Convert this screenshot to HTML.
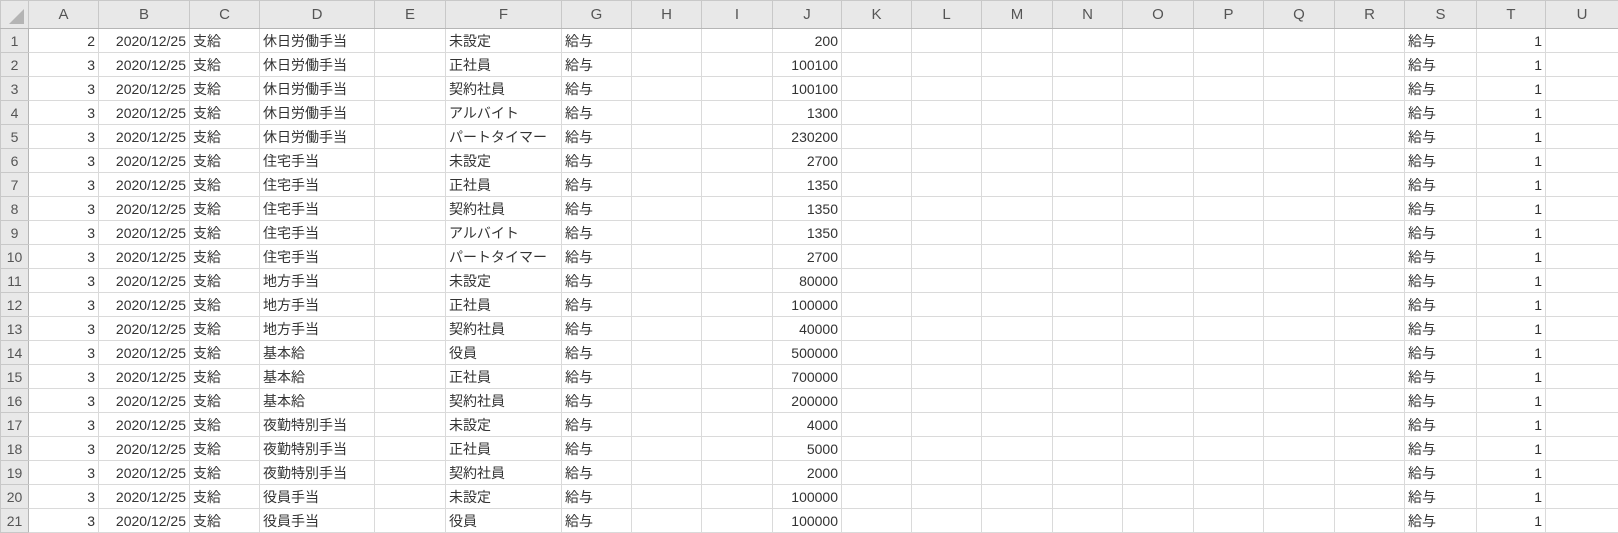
<!DOCTYPE html>
<html><head><meta charset="utf-8">
<style>
html,body{margin:0;padding:0;background:#fff;width:1618px;height:533px;overflow:hidden}
table{border-collapse:collapse;table-layout:fixed;width:1618px;font-family:"Liberation Sans","Noto Sans CJK JP",sans-serif;font-size:14px;color:#333}
td,th{border:1px solid #dadada;height:23px;padding:0 3px;white-space:nowrap;overflow:hidden;box-sizing:border-box}
th{background:#e8e8e8;font-weight:normal;color:#555;border-color:#c8c8c8;height:28px;text-align:center;border-bottom:1px solid #b5b5b5;font-size:15px}
td.h{background:#e8e8e8;color:#555;text-align:center;border-color:#c8c8c8;border-right:1px solid #b5b5b5;font-size:14px;padding:0}
td.r{text-align:right}
tr.d{height:24px}
th.c{position:relative}
th.c::after{content:"";position:absolute;right:4px;bottom:4px;border-left:15px solid transparent;border-bottom:15px solid #b4b4b4}
</style></head><body>
<table>
<colgroup><col style="width:28px"><col style="width:70px"><col style="width:91px"><col style="width:70px"><col style="width:115px"><col style="width:71px"><col style="width:116px"><col style="width:70px"><col style="width:70px"><col style="width:71px"><col style="width:69px"><col style="width:70px"><col style="width:70px"><col style="width:71px"><col style="width:70px"><col style="width:71px"><col style="width:70px"><col style="width:71px"><col style="width:70px"><col style="width:72px"><col style="width:69px"><col style="width:73px"></colgroup>
<tr><th class="c"></th><th>A</th><th>B</th><th>C</th><th>D</th><th>E</th><th>F</th><th>G</th><th>H</th><th>I</th><th>J</th><th>K</th><th>L</th><th>M</th><th>N</th><th>O</th><th>P</th><th>Q</th><th>R</th><th>S</th><th>T</th><th>U</th></tr>
<tr class="d"><td class="h">1</td><td class="r">2</td><td class="r">2020/12/25</td><td>支給</td><td>休日労働手当</td><td></td><td>未設定</td><td>給与</td><td></td><td></td><td class="r">200</td><td></td><td></td><td></td><td></td><td></td><td></td><td></td><td></td><td>給与</td><td class="r">1</td><td></td></tr>
<tr class="d"><td class="h">2</td><td class="r">3</td><td class="r">2020/12/25</td><td>支給</td><td>休日労働手当</td><td></td><td>正社員</td><td>給与</td><td></td><td></td><td class="r">100100</td><td></td><td></td><td></td><td></td><td></td><td></td><td></td><td></td><td>給与</td><td class="r">1</td><td></td></tr>
<tr class="d"><td class="h">3</td><td class="r">3</td><td class="r">2020/12/25</td><td>支給</td><td>休日労働手当</td><td></td><td>契約社員</td><td>給与</td><td></td><td></td><td class="r">100100</td><td></td><td></td><td></td><td></td><td></td><td></td><td></td><td></td><td>給与</td><td class="r">1</td><td></td></tr>
<tr class="d"><td class="h">4</td><td class="r">3</td><td class="r">2020/12/25</td><td>支給</td><td>休日労働手当</td><td></td><td>アルバイト</td><td>給与</td><td></td><td></td><td class="r">1300</td><td></td><td></td><td></td><td></td><td></td><td></td><td></td><td></td><td>給与</td><td class="r">1</td><td></td></tr>
<tr class="d"><td class="h">5</td><td class="r">3</td><td class="r">2020/12/25</td><td>支給</td><td>休日労働手当</td><td></td><td>パートタイマー</td><td>給与</td><td></td><td></td><td class="r">230200</td><td></td><td></td><td></td><td></td><td></td><td></td><td></td><td></td><td>給与</td><td class="r">1</td><td></td></tr>
<tr class="d"><td class="h">6</td><td class="r">3</td><td class="r">2020/12/25</td><td>支給</td><td>住宅手当</td><td></td><td>未設定</td><td>給与</td><td></td><td></td><td class="r">2700</td><td></td><td></td><td></td><td></td><td></td><td></td><td></td><td></td><td>給与</td><td class="r">1</td><td></td></tr>
<tr class="d"><td class="h">7</td><td class="r">3</td><td class="r">2020/12/25</td><td>支給</td><td>住宅手当</td><td></td><td>正社員</td><td>給与</td><td></td><td></td><td class="r">1350</td><td></td><td></td><td></td><td></td><td></td><td></td><td></td><td></td><td>給与</td><td class="r">1</td><td></td></tr>
<tr class="d"><td class="h">8</td><td class="r">3</td><td class="r">2020/12/25</td><td>支給</td><td>住宅手当</td><td></td><td>契約社員</td><td>給与</td><td></td><td></td><td class="r">1350</td><td></td><td></td><td></td><td></td><td></td><td></td><td></td><td></td><td>給与</td><td class="r">1</td><td></td></tr>
<tr class="d"><td class="h">9</td><td class="r">3</td><td class="r">2020/12/25</td><td>支給</td><td>住宅手当</td><td></td><td>アルバイト</td><td>給与</td><td></td><td></td><td class="r">1350</td><td></td><td></td><td></td><td></td><td></td><td></td><td></td><td></td><td>給与</td><td class="r">1</td><td></td></tr>
<tr class="d"><td class="h">10</td><td class="r">3</td><td class="r">2020/12/25</td><td>支給</td><td>住宅手当</td><td></td><td>パートタイマー</td><td>給与</td><td></td><td></td><td class="r">2700</td><td></td><td></td><td></td><td></td><td></td><td></td><td></td><td></td><td>給与</td><td class="r">1</td><td></td></tr>
<tr class="d"><td class="h">11</td><td class="r">3</td><td class="r">2020/12/25</td><td>支給</td><td>地方手当</td><td></td><td>未設定</td><td>給与</td><td></td><td></td><td class="r">80000</td><td></td><td></td><td></td><td></td><td></td><td></td><td></td><td></td><td>給与</td><td class="r">1</td><td></td></tr>
<tr class="d"><td class="h">12</td><td class="r">3</td><td class="r">2020/12/25</td><td>支給</td><td>地方手当</td><td></td><td>正社員</td><td>給与</td><td></td><td></td><td class="r">100000</td><td></td><td></td><td></td><td></td><td></td><td></td><td></td><td></td><td>給与</td><td class="r">1</td><td></td></tr>
<tr class="d"><td class="h">13</td><td class="r">3</td><td class="r">2020/12/25</td><td>支給</td><td>地方手当</td><td></td><td>契約社員</td><td>給与</td><td></td><td></td><td class="r">40000</td><td></td><td></td><td></td><td></td><td></td><td></td><td></td><td></td><td>給与</td><td class="r">1</td><td></td></tr>
<tr class="d"><td class="h">14</td><td class="r">3</td><td class="r">2020/12/25</td><td>支給</td><td>基本給</td><td></td><td>役員</td><td>給与</td><td></td><td></td><td class="r">500000</td><td></td><td></td><td></td><td></td><td></td><td></td><td></td><td></td><td>給与</td><td class="r">1</td><td></td></tr>
<tr class="d"><td class="h">15</td><td class="r">3</td><td class="r">2020/12/25</td><td>支給</td><td>基本給</td><td></td><td>正社員</td><td>給与</td><td></td><td></td><td class="r">700000</td><td></td><td></td><td></td><td></td><td></td><td></td><td></td><td></td><td>給与</td><td class="r">1</td><td></td></tr>
<tr class="d"><td class="h">16</td><td class="r">3</td><td class="r">2020/12/25</td><td>支給</td><td>基本給</td><td></td><td>契約社員</td><td>給与</td><td></td><td></td><td class="r">200000</td><td></td><td></td><td></td><td></td><td></td><td></td><td></td><td></td><td>給与</td><td class="r">1</td><td></td></tr>
<tr class="d"><td class="h">17</td><td class="r">3</td><td class="r">2020/12/25</td><td>支給</td><td>夜勤特別手当</td><td></td><td>未設定</td><td>給与</td><td></td><td></td><td class="r">4000</td><td></td><td></td><td></td><td></td><td></td><td></td><td></td><td></td><td>給与</td><td class="r">1</td><td></td></tr>
<tr class="d"><td class="h">18</td><td class="r">3</td><td class="r">2020/12/25</td><td>支給</td><td>夜勤特別手当</td><td></td><td>正社員</td><td>給与</td><td></td><td></td><td class="r">5000</td><td></td><td></td><td></td><td></td><td></td><td></td><td></td><td></td><td>給与</td><td class="r">1</td><td></td></tr>
<tr class="d"><td class="h">19</td><td class="r">3</td><td class="r">2020/12/25</td><td>支給</td><td>夜勤特別手当</td><td></td><td>契約社員</td><td>給与</td><td></td><td></td><td class="r">2000</td><td></td><td></td><td></td><td></td><td></td><td></td><td></td><td></td><td>給与</td><td class="r">1</td><td></td></tr>
<tr class="d"><td class="h">20</td><td class="r">3</td><td class="r">2020/12/25</td><td>支給</td><td>役員手当</td><td></td><td>未設定</td><td>給与</td><td></td><td></td><td class="r">100000</td><td></td><td></td><td></td><td></td><td></td><td></td><td></td><td></td><td>給与</td><td class="r">1</td><td></td></tr>
<tr class="d"><td class="h">21</td><td class="r">3</td><td class="r">2020/12/25</td><td>支給</td><td>役員手当</td><td></td><td>役員</td><td>給与</td><td></td><td></td><td class="r">100000</td><td></td><td></td><td></td><td></td><td></td><td></td><td></td><td></td><td>給与</td><td class="r">1</td><td></td></tr>
</table>
</body></html>
